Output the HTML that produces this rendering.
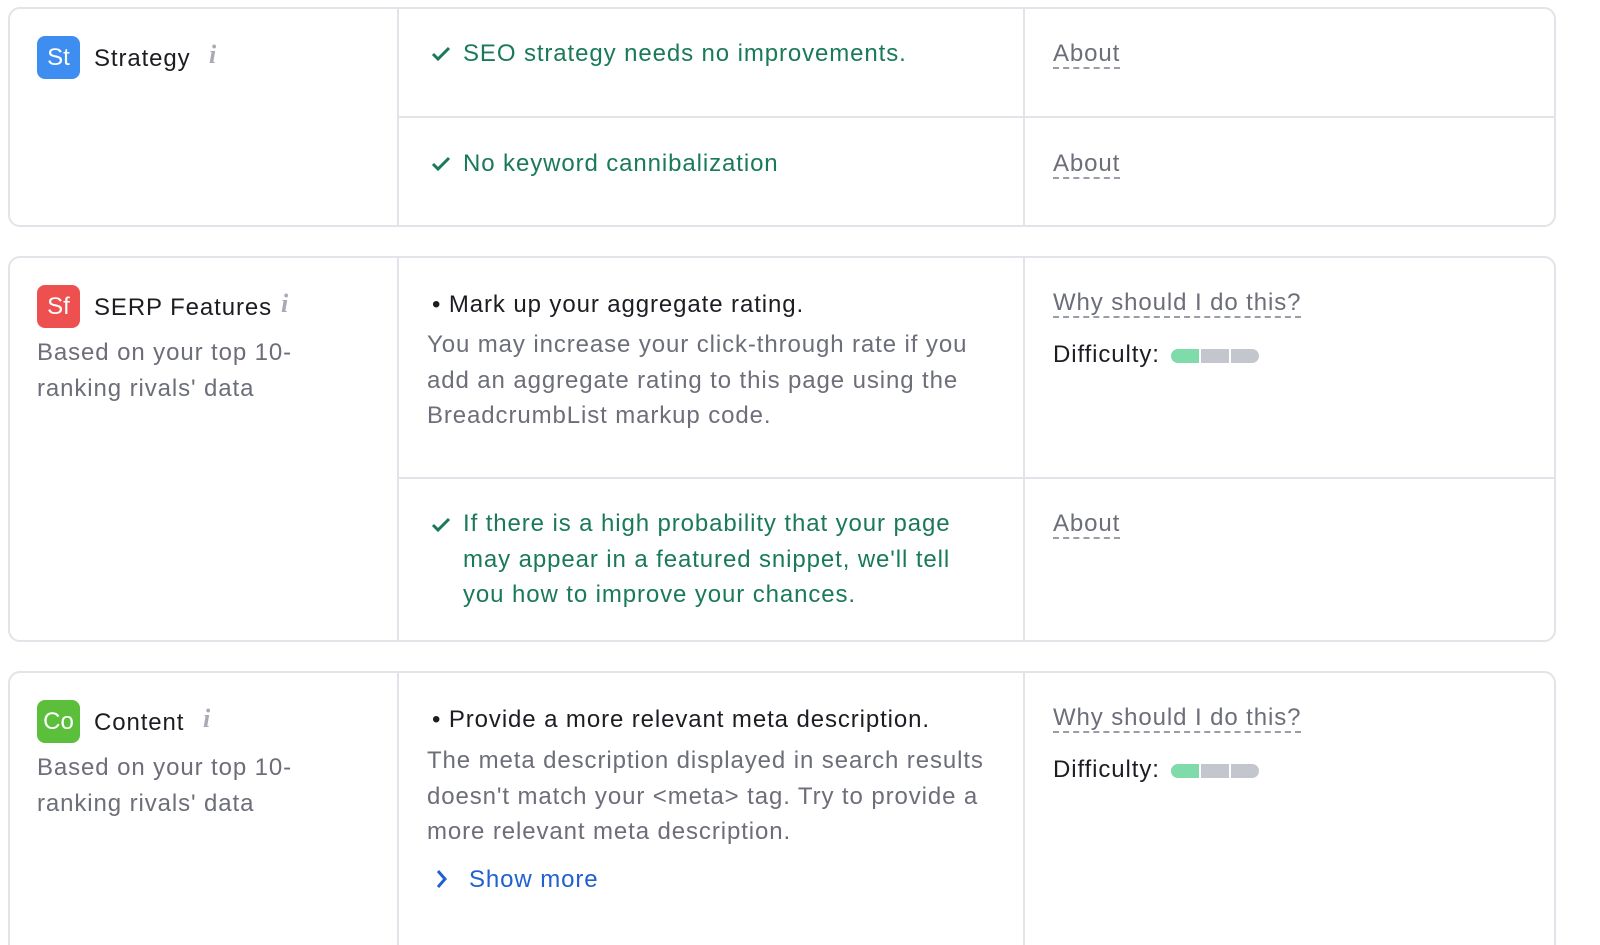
<!DOCTYPE html>
<html><head><style>
*{margin:0;padding:0;box-sizing:border-box}
html,body{width:1600px;height:945px;overflow:hidden}
body{background:#fff;font-family:"Liberation Sans",sans-serif;position:relative;color:#1c1d22}
.card{position:absolute;left:8px;width:1548px;border:2px solid #e3e4e9;border-radius:12px}
.v{position:absolute;top:0;bottom:0;width:2px;background:#e3e4e9}
.h{position:absolute;left:389px;right:0;height:2px;background:#e3e4e9}
.t{position:absolute;font-size:24px;white-space:nowrap;line-height:35px;letter-spacing:0.9px}
.badge{position:absolute;width:43px;height:43px;border-radius:8px;color:#fff;font-size:24px;text-align:center;line-height:43px}
.g{color:#1a7a57}
.gr{color:#6c6e79}
.lnk{color:#6c6e79;border-bottom:2px dashed #9a9ca6;line-height:30px}
.info{position:absolute;color:#a8abb5;font-style:italic;font-family:"Liberation Serif",serif;font-size:26px;font-weight:bold}
.chk{position:absolute;width:22px;height:22px}
.bar{position:absolute;height:14px;width:88px}
.bar i{position:absolute;top:0;height:14px;width:28px;background:#c4c6cd}
</style></head><body>

<div class="card" style="top:7px;height:220px">
<div class="v" style="left:387px"></div><div class="v" style="left:1013px"></div>
<div class="h" style="top:107px"></div>
</div>
<div class="badge" style="left:37px;top:36px;background:#3d8ef0">St</div>
<div class="t" style="left:94px;top:41px">Strategy</div>
<div class="info" style="left:209px;top:40px">i</div>
<svg class="chk" style="left:430px;top:43px" viewBox="0 0 22 22"><path d="M3 11l5 5 11-11" stroke="#1a7a57" stroke-width="3" fill="none"/></svg>
<div class="t g" style="left:463px;top:36px">SEO strategy needs no improvements.</div>
<div class="t" style="left:1053px;top:36px"><span class="lnk">About</span></div>
<svg class="chk" style="left:430px;top:153px" viewBox="0 0 22 22"><path d="M3 11l5 5 11-11" stroke="#1a7a57" stroke-width="3" fill="none"/></svg>
<div class="t g" style="left:463px;top:146px">No keyword cannibalization</div>
<div class="t" style="left:1053px;top:146px"><span class="lnk">About</span></div>

<div class="card" style="top:256px;height:386px">
<div class="v" style="left:387px"></div><div class="v" style="left:1013px"></div>
<div class="h" style="top:219px"></div>
</div>
<div class="badge" style="left:37px;top:285px;background:#ee4f4f">Sf</div>
<div class="t" style="left:94px;top:290px">SERP Features</div>
<div class="info" style="left:281px;top:289px">i</div>
<div class="t gr" style="left:37px;top:335px;line-height:36px">Based on your top 10-<br>ranking rivals' data</div>
<div class="t" style="left:432px;top:287px">• Mark up your aggregate rating.</div>
<div class="t gr" style="left:427px;top:327px;line-height:35.5px">You may increase your click-through rate if you<br>add an aggregate rating to this page using the<br>BreadcrumbList markup code.</div>
<div class="t" style="left:1053px;top:285px"><span class="lnk">Why should I do this?</span></div>
<div class="t" style="left:1053px;top:337px">Difficulty:</div>
<div class="bar" style="left:1171px;top:349px"><i style="left:0;background:#7fdbaa;border-radius:7px 0 0 7px"></i><i style="left:30px"></i><i style="left:60px;border-radius:0 7px 7px 0"></i></div>
<svg class="chk" style="left:430px;top:514px" viewBox="0 0 22 22"><path d="M3 11l5 5 11-11" stroke="#1a7a57" stroke-width="3" fill="none"/></svg>
<div class="t g" style="left:463px;top:506px;line-height:35.5px">If there is a high probability that your page<br>may appear in a featured snippet, we'll tell<br>you how to improve your chances.</div>
<div class="t" style="left:1053px;top:506px"><span class="lnk">About</span></div>

<div class="card" style="top:671px;height:274px;border-bottom:none;border-radius:12px 12px 0 0">
<div class="v" style="left:387px"></div><div class="v" style="left:1013px"></div>
</div>
<div class="badge" style="left:37px;top:700px;background:#5bbf3c">Co</div>
<div class="t" style="left:94px;top:705px">Content</div>
<div class="info" style="left:203px;top:704px">i</div>
<div class="t gr" style="left:37px;top:750px;line-height:36px">Based on your top 10-<br>ranking rivals' data</div>
<div class="t" style="left:432px;top:702px">• Provide a more relevant meta description.</div>
<div class="t gr" style="left:427px;top:743px;line-height:35.5px">The meta description displayed in search results<br>doesn't match your &lt;meta&gt; tag. Try to provide a<br>more relevant meta description.</div>
<svg style="position:absolute;left:435px;top:869px;width:14px;height:20px" viewBox="0 0 14 20"><path d="M3 2l7 8-7 8" stroke="#2060d0" stroke-width="3" fill="none"/></svg>
<div class="t" style="left:469px;top:862px;color:#2060d0">Show more</div>
<div class="t" style="left:1053px;top:700px"><span class="lnk">Why should I do this?</span></div>
<div class="t" style="left:1053px;top:752px">Difficulty:</div>
<div class="bar" style="left:1171px;top:764px"><i style="left:0;background:#7fdbaa;border-radius:7px 0 0 7px"></i><i style="left:30px"></i><i style="left:60px;border-radius:0 7px 7px 0"></i></div>
</body></html>
